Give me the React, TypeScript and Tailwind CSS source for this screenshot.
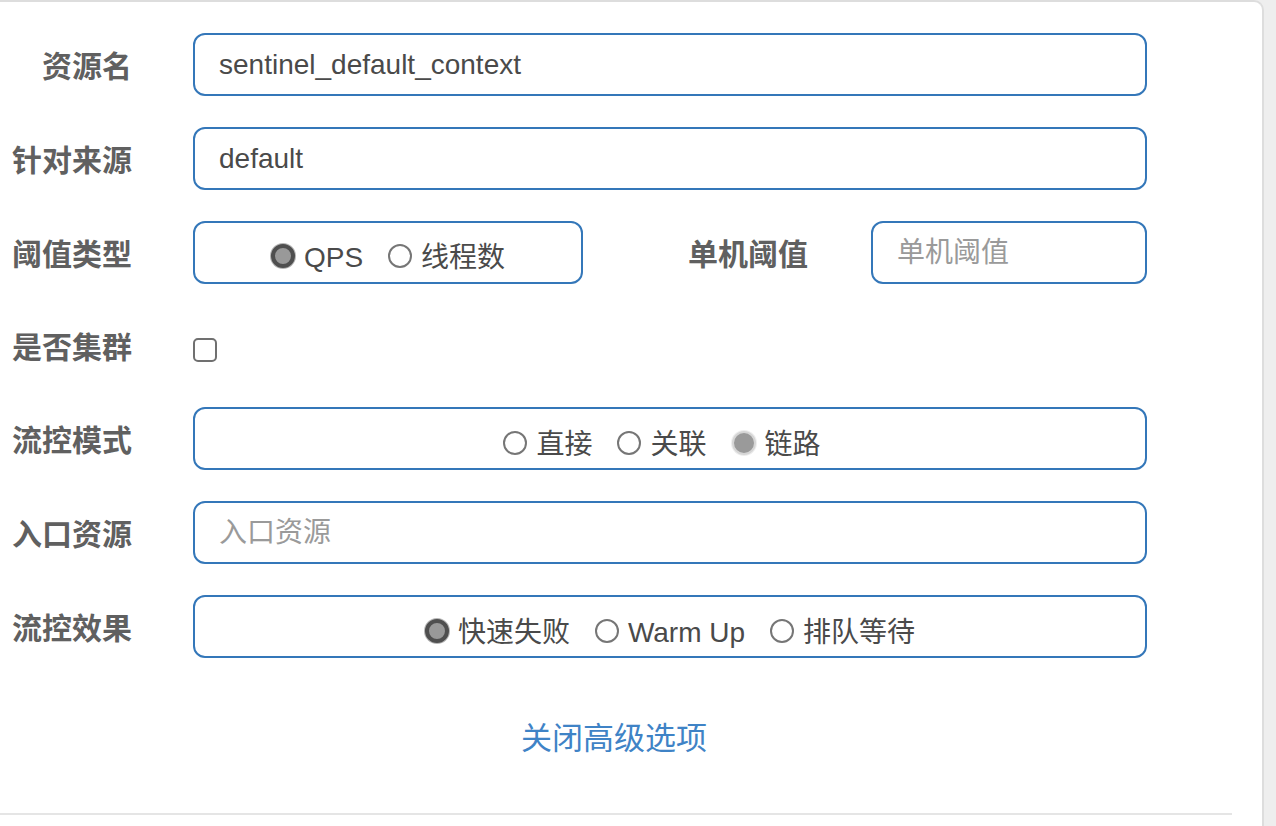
import React from "react";

const font = { fontFamily: '"Liberation Sans", "Noto Sans CJK SC", sans-serif' };

type RadioKind = "on" | "off" | "dim";

function Radio({ kind, label }: { kind: RadioKind; label: string }) {
    const dot =
        kind === "on"
            ? "border-[4px] border-[#4f4f4f] bg-[#999999] shadow-[0_0_0_1px_#b5b5b5]"
            : kind === "dim"
            ? "border-[2px] border-[#d6d6d6] bg-[#9a9a9a] shadow-[0_0_0_1px_#eeeeee]"
            : "border-[2px] border-[#767676] bg-white";
    return (
        <label className="flex items-center gap-[9px]">
            <span className={`block w-[24px] h-[24px] rounded-full ${dot}`} />
            <span className="text-[28px] text-[#4a4a4a] leading-none pt-[4px]">{label}</span>
        </label>
    );
}

function Label({ text }: { text: string }) {
    return (
        <div className="w-[132px] shrink-0 text-right text-[30px] font-bold text-[#606060] leading-none pt-[4px]">
            {text}
        </div>
    );
}

const box = "h-[63px] border-2 border-[#3477b9] rounded-[12px] bg-white";

export default function App() {
    return (
        <div className="w-[1276px] h-[826px] bg-[#eeeeee] overflow-hidden" style={font}>
            <div className="w-[1264px] h-full bg-white border-t-2 border-r-2 border-[#dddddd] rounded-tr-[10px] pt-[31px]">
                <div className="flex flex-col gap-[31px]">
                    <div className="flex items-center gap-[61px]">
                        <Label text="资源名" />
                        <div className={`${box} w-[954px] flex items-center pl-[24px] text-[28px] text-[#4a4a4a]`}>
                            sentinel_default_context
                        </div>
                    </div>
                    <div className="flex items-center gap-[61px]">
                        <Label text="针对来源" />
                        <div className={`${box} w-[954px] flex items-center pl-[24px] text-[28px] text-[#4a4a4a]`}>
                            default
                        </div>
                    </div>
                    <div className="flex items-center gap-[61px]">
                        <Label text="阈值类型" />
                        <div className={`${box} w-[390px] flex items-center justify-center gap-[25px] pt-[6px]`}>
                            <Radio kind="on" label="QPS" />
                            <Radio kind="off" label="线程数" />
                        </div>
                        <div className="-ml-[61px] w-[225px] text-right text-[30px] font-bold text-[#606060] leading-none pt-[4px]">
                            单机阈值
                        </div>
                        <div className={`${box} w-[276px] ml-[2px] flex items-center pl-[24px] text-[28px] text-[#9a9a9a]`}>
                            单机阈值
                        </div>
                    </div>
                    <div className="flex items-center gap-[61px] h-[61px]">
                        <Label text="是否集群" />
                        <span className="block w-[24px] h-[24px] mt-[8px] rounded-[5px] border-2 border-[#707070] bg-white" />
                    </div>
                    <div className="flex items-center gap-[61px]">
                        <Label text="流控模式" />
                        <div className={`${box} w-[954px] flex items-center justify-center gap-[25px] pr-[16px] pt-[8px]`}>
                            <Radio kind="off" label="直接" />
                            <Radio kind="off" label="关联" />
                            <Radio kind="dim" label="链路" />
                        </div>
                    </div>
                    <div className="flex items-center gap-[61px]">
                        <Label text="入口资源" />
                        <div className={`${box} w-[954px] flex items-center pl-[24px] text-[28px] text-[#9a9a9a]`}>
                            入口资源
                        </div>
                    </div>
                    <div className="flex items-center gap-[61px]">
                        <Label text="流控效果" />
                        <div className={`${box} w-[954px] flex items-center justify-center gap-[25px] pt-[8px]`}>
                            <Radio kind="on" label="快速失败" />
                            <Radio kind="off" label="Warm Up" />
                            <Radio kind="off" label="排队等待" />
                        </div>
                    </div>
                </div>
                <div className="w-[1228px] mt-[61px] text-center text-[31px] leading-[40px] text-[#3f83c6]">
                    关闭高级选项
                </div>
                <div className="w-[1232px] h-[2px] bg-[#e5e5e5] mt-[54px]" />
            </div>
        </div>
    );
}
